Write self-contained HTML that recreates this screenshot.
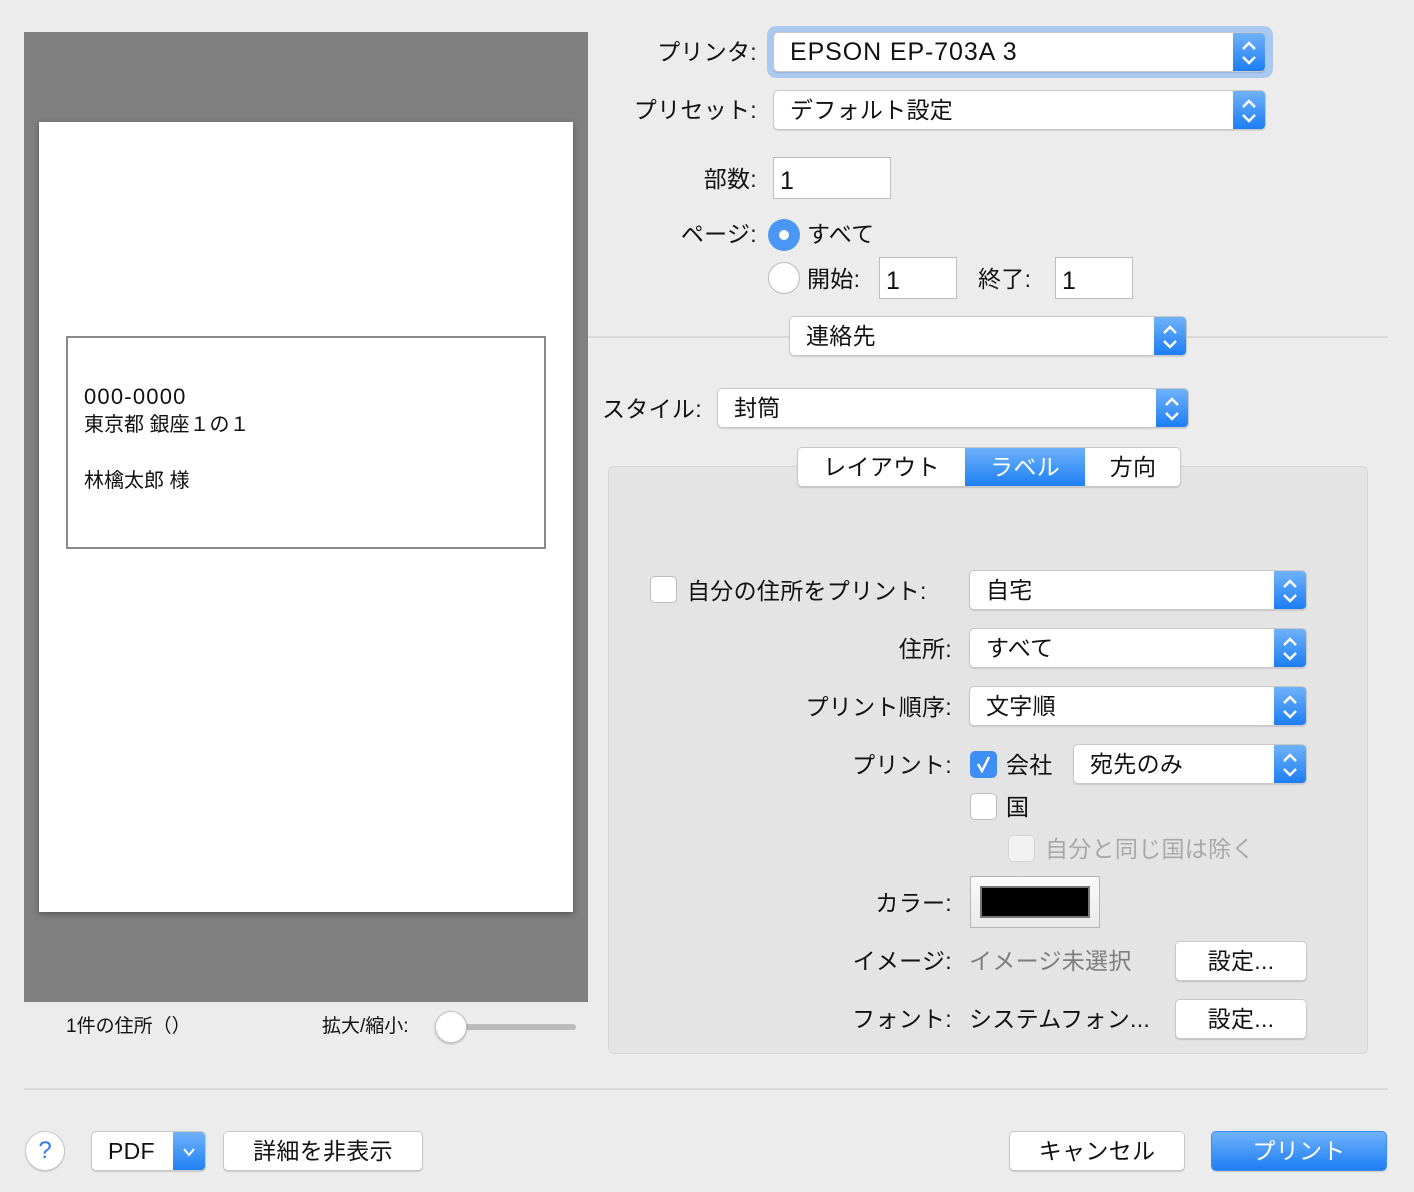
<!DOCTYPE html>
<html><head><meta charset="utf-8">
<style>
*{margin:0;padding:0;box-sizing:border-box}
body{width:1414px;height:1192px;background:#ececec;font-family:"Liberation Sans","Noto Sans CJK JP",sans-serif;color:#111;position:relative;overflow:hidden}
.a{position:absolute;white-space:nowrap}
.t{font-size:23px;line-height:28px;letter-spacing:.3px}
.r{text-align:right}
.pop{position:absolute;height:40px;background:#fff;border:1px solid #c8c8c8;border-radius:5px;box-shadow:0 1px 1px rgba(0,0,0,.12);font-size:23px;line-height:38px;padding-left:16px;overflow:hidden;letter-spacing:.3px}
.pop .ar{position:absolute;right:0;top:0;bottom:0;width:32px;background:linear-gradient(#6fb2fa,#1c7ef4)}
.pop .ar svg{position:absolute;left:7px;top:6px}
.in{position:absolute;height:42px;background:#fff;border:1px solid #bdbdbd;font-size:25px;line-height:46px;padding-left:6px}
.btn{position:absolute;height:40px;background:#fff;border:1px solid #c9c9c9;border-radius:5px;box-shadow:0 1px 1px rgba(0,0,0,.15);font-size:23px;line-height:38px;text-align:center;letter-spacing:.3px}
.cb{position:absolute;width:27px;height:27px;background:#fff;border:1px solid #bdbdbd;border-radius:5px}
</style></head><body>

<!-- preview -->
<div class="a" style="left:24px;top:32px;width:564px;height:970px;background:#808080"></div>
<div class="a" style="left:39px;top:122px;width:534px;height:790px;background:#fff;box-shadow:0 2px 6px rgba(0,0,0,.35)"></div>
<div class="a" style="left:66px;top:336px;width:480px;height:213px;border:2px solid #8a8a8a;background:#fff"></div>
<div class="a" style="left:84px;top:383px;font-size:22px;line-height:28px;letter-spacing:1.2px">000-0000</div>
<div class="a" style="left:84px;top:412px;font-size:20px;line-height:26px">東京都 銀座１の１</div>
<div class="a" style="left:84px;top:468px;font-size:20px;line-height:26px">林檎太郎 様</div>

<div class="a" style="left:66px;top:1014px;font-size:19px;line-height:26px">1件の住所（）</div>
<div class="a" style="left:322px;top:1014px;font-size:19px;line-height:26px">拡大/縮小:</div>
<div class="a" style="left:450px;top:1024px;width:126px;height:6px;background:#bbb;border-radius:3px"></div>
<div class="a" style="left:435px;top:1011px;width:32px;height:32px;background:#fff;border:1px solid #c4c4c4;border-radius:50%;box-shadow:0 1px 2px rgba(0,0,0,.25)"></div>

<!-- top right -->
<div class="a" style="left:767px;top:26px;width:506px;height:52px;border-radius:9px;background:#a9c9f1"></div>
<div class="a t r" style="right:657px;top:38px">プリンタ:</div>
<div class="pop" style="left:773px;top:32px;width:493px"><span style="font-size:25px;letter-spacing:.9px">EPSON EP-703A 3</span><div class="ar"><svg width="18" height="28" viewBox="0 0 18 28"><path d="M3 10L9 4L15 10M3 18L9 24L15 18" fill="none" stroke="#fff" stroke-width="2.4"/></svg></div></div>
<div class="a t r" style="right:657px;top:96px">プリセット:</div>
<div class="pop" style="left:773px;top:90px;width:493px">デフォルト設定<div class="ar"><svg width="18" height="28" viewBox="0 0 18 28"><path d="M3 10L9 4L15 10M3 18L9 24L15 18" fill="none" stroke="#fff" stroke-width="2.4"/></svg></div></div>

<div class="a t r" style="right:657px;top:165px">部数:</div>
<div class="in" style="left:773px;top:157px;width:118px">1</div>

<div class="a t r" style="right:657px;top:220px">ページ:</div>
<div class="a" style="left:768px;top:219px;width:32px;height:32px;border-radius:50%;background:#4b97f5"></div>
<div class="a" style="left:779px;top:230px;width:10px;height:10px;border-radius:50%;background:#fff"></div>
<div class="a t" style="left:807px;top:220px">すべて</div>
<div class="a" style="left:768px;top:262px;width:32px;height:32px;border-radius:50%;background:#fff;border:1px solid #bcbcbc"></div>
<div class="a t" style="left:807px;top:265px">開始:</div>
<div class="in" style="left:879px;top:257px;width:78px">1</div>
<div class="a t" style="left:978px;top:265px">終了:</div>
<div class="in" style="left:1055px;top:257px;width:78px">1</div>

<div class="a" style="left:588px;top:336px;width:800px;height:2px;background:#d8d8d8"></div>
<div class="pop" style="left:789px;top:316px;width:398px">連絡先<div class="ar"><svg width="18" height="28" viewBox="0 0 18 28"><path d="M3 10L9 4L15 10M3 18L9 24L15 18" fill="none" stroke="#fff" stroke-width="2.4"/></svg></div></div>

<div class="a t" style="left:602px;top:395px">スタイル:</div>
<div class="pop" style="left:717px;top:388px;width:472px">封筒<div class="ar"><svg width="18" height="28" viewBox="0 0 18 28"><path d="M3 10L9 4L15 10M3 18L9 24L15 18" fill="none" stroke="#fff" stroke-width="2.4"/></svg></div></div>

<!-- tab box -->
<div class="a" style="left:608px;top:466px;width:760px;height:588px;background:#e4e4e4;border:1px solid #d6d6d6;border-radius:6px"></div>
<div class="a" style="left:797px;top:447px;width:384px;height:40px;background:#fff;border:1px solid #c8c8c8;border-radius:5px;box-shadow:0 1px 1px rgba(0,0,0,.15);overflow:hidden">
 <div class="a t" style="left:0;top:0;width:167px;line-height:38px;text-align:center">レイアウト</div>
 <div class="a t" style="left:167px;top:-1px;width:120px;height:40px;line-height:40px;text-align:center;color:#fff;background:linear-gradient(#6fb2fa,#1c7ef4)">ラベル</div>
 <div class="a t" style="left:287px;top:0;width:96px;line-height:38px;text-align:center">方向</div>
</div>

<div class="cb" style="left:650px;top:576px"></div>
<div class="a t" style="left:687px;top:577px">自分の住所をプリント:</div>
<div class="pop" style="left:969px;top:570px;width:338px">自宅<div class="ar"><svg width="18" height="28" viewBox="0 0 18 28"><path d="M3 10L9 4L15 10M3 18L9 24L15 18" fill="none" stroke="#fff" stroke-width="2.4"/></svg></div></div>

<div class="a t r" style="right:462px;top:635px">住所:</div>
<div class="pop" style="left:969px;top:628px;width:338px">すべて<div class="ar"><svg width="18" height="28" viewBox="0 0 18 28"><path d="M3 10L9 4L15 10M3 18L9 24L15 18" fill="none" stroke="#fff" stroke-width="2.4"/></svg></div></div>

<div class="a t r" style="right:462px;top:693px">プリント順序:</div>
<div class="pop" style="left:969px;top:686px;width:338px">文字順<div class="ar"><svg width="18" height="28" viewBox="0 0 18 28"><path d="M3 10L9 4L15 10M3 18L9 24L15 18" fill="none" stroke="#fff" stroke-width="2.4"/></svg></div></div>

<div class="a t r" style="right:462px;top:751px">プリント:</div>
<div class="cb" style="left:970px;top:751px;background:#3f8ef5;border-color:#3f8ef5"><svg width="27" height="27" viewBox="0 0 27 27" style="position:absolute;left:-1px;top:-1px"><path d="M8 13L12 20L19 6" fill="none" stroke="#fff" stroke-width="2.4"/></svg></div>
<div class="a t" style="left:1006px;top:751px">会社</div>
<div class="pop" style="left:1073px;top:744px;width:234px">宛先のみ<div class="ar"><svg width="18" height="28" viewBox="0 0 18 28"><path d="M3 10L9 4L15 10M3 18L9 24L15 18" fill="none" stroke="#fff" stroke-width="2.4"/></svg></div></div>

<div class="cb" style="left:970px;top:793px"></div>
<div class="a t" style="left:1006px;top:793px">国</div>
<div class="cb" style="left:1008px;top:835px;background:#f2f2f2;border-color:#d6d6d6"></div>
<div class="a t" style="left:1045px;top:835px;color:#a8a8a8">自分と同じ国は除く</div>

<div class="a t r" style="right:462px;top:889px">カラー:</div>
<div class="a" style="left:970px;top:876px;width:130px;height:52px;border:1px solid #b5b5b5;background:linear-gradient(#fafafa,#e9e9e9)"></div>
<div class="a" style="left:980px;top:886px;width:110px;height:32px;background:#000;border:2px solid #777"></div>

<div class="a t r" style="right:462px;top:947px">イメージ:</div>
<div class="a t" style="left:969px;top:947px;color:#7d7d7d">イメージ未選択</div>
<div class="btn" style="left:1175px;top:941px;width:132px">設定...</div>

<div class="a t r" style="right:462px;top:1005px">フォント:</div>
<div class="a t" style="left:969px;top:1005px">システムフォン...</div>
<div class="btn" style="left:1175px;top:999px;width:132px">設定...</div>

<!-- bottom -->
<div class="a" style="left:24px;top:1088px;width:1364px;height:2px;background:#d8d8d8"></div>
<div class="a" style="left:25px;top:1131px;width:40px;height:40px;border-radius:50%;background:#fff;border:1px solid #c8c8c8;box-shadow:0 1px 1px rgba(0,0,0,.15);color:#2b7cf0;font-size:24px;line-height:38px;text-align:center">?</div>
<div class="btn" style="left:91px;top:1131px;width:115px;text-align:left;padding-left:16px;overflow:hidden">PDF<div class="a" style="right:0;top:0;width:32px;height:40px;background:linear-gradient(#6fb2fa,#1c7ef4)"><svg width="32" height="40" viewBox="0 0 32 40"><path d="M11 17L16 23L21 17" fill="none" stroke="#fff" stroke-width="2"/></svg></div></div>
<div class="btn" style="left:223px;top:1131px;width:200px">詳細を非表示</div>
<div class="btn" style="left:1009px;top:1131px;width:176px">キャンセル</div>
<div class="btn" style="left:1211px;top:1131px;width:176px;color:#fff;border-color:#3d8cf3;background:linear-gradient(#6fb2fa,#1c7ef4)">プリント</div>
</body></html>
